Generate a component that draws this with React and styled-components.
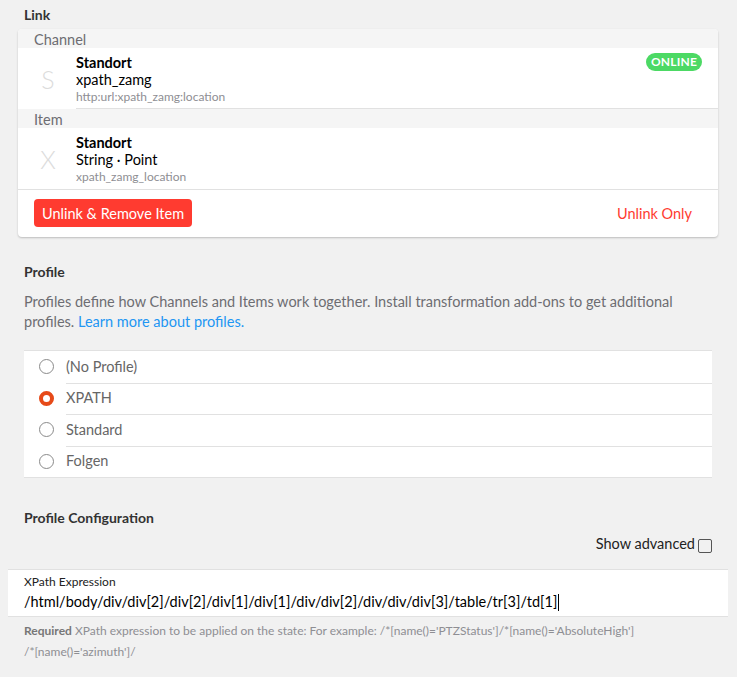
import React, { useState } from "react";
import styled, { createGlobalStyle } from "styled-components";

const GlobalStyle = createGlobalStyle`
  html, body {
    margin: 0;
    padding: 0;
    background: #f1f1f1;
    font-family: Lato, "Noto Sans", sans-serif;
    font-size: 14.5px;
    color: #000;
  }
`;

const Page = styled.div`
  display: flex;
  flex-direction: column;
  padding-bottom: 20px;
`;

const BlockTitle = styled.div`
  padding: 0 24px;
  margin: ${(p) => p.$top || 0}px 0 0;
  font-weight: 700;
  font-size: 14px;
  line-height: 16px;
  color: #333;
`;

const Card = styled.div`
  margin: 6px 19px 0 18px;
  background: #fff;
  border-radius: 4px;
  box-shadow: 0 1px 2px rgba(0, 0, 0, 0.22);
  overflow: hidden;
`;

const GroupTitle = styled.div`
  background: #f5f5f5;
  padding: 2px 16px 0;
  height: 17px;
  line-height: 17px;
  color: #6d6d72;
`;

const LinkItem = styled.div`
  display: flex;
  align-items: stretch;
`;

const Media = styled.div`
  width: 56px;
  display: flex;
  justify-content: center;
  align-items: center;
  color: #dcdcdc;
  font-size: 25px;
  font-weight: 300;
  padding-left: 2px;
`;

const Inner = styled.div`
  flex: 1;
  display: flex;
  justify-content: space-between;
  padding: 6px 16px 4px 0;
  border-bottom: 1px solid ${(p) => (p.$last ? "transparent" : "#e1e1e1")};
`;

const ItemText = styled.div`
  display: flex;
  flex-direction: column;
`;

const ItemTitle = styled.div`
  font-weight: 700;
  line-height: 17px;
`;

const ItemSubtitle = styled.div`
  line-height: 18px;
`;

const ItemFooter = styled.div`
  font-size: 12px;
  line-height: 15px;
  color: #8e8e93;
`;

const Badge = styled.span`
  align-self: flex-start;
  margin-top: -1px;
  background: #4cd964;
  color: #fff;
  font-size: 12px;
  font-weight: 700;
  line-height: 18px;
  height: 18px;
  padding: 0 5px;
  border-radius: 9px;
  letter-spacing: 0.2px;
`;

const Actions = styled.div`
  display: flex;
  justify-content: space-between;
  align-items: center;
  border-top: 1px solid #e1e1e1;
  padding: 9px 26px 10px 16px;
`;

const Button = styled.button`
  font-family: inherit;
  font-size: 14.5px;
  height: 28px;
  border: none;
  border-radius: 4px;
  padding: 0 ${(p) => (p.$fill ? 8 : 0)}px;
  background: ${(p) => (p.$fill ? "#ff3b30" : "transparent")};
  color: ${(p) => (p.$fill ? "#fff" : "#ff3b30")};
  cursor: pointer;
`;

const Description = styled.p`
  margin: 12px 0 0;
  padding: 0 24px;
  color: #6d6d72;
  line-height: 20px;

  a {
    color: #2196f3;
    text-decoration: none;
  }
`;

const RadioList = styled.div`
  margin: 18px 25px 0 24px;
  background: #fff;
  border-top: 1px solid #e1e1e1;
  border-bottom: 1px solid #e1e1e1;
`;

const RadioRow = styled.label`
  display: flex;
  align-items: center;
  height: 31.5px;
  cursor: pointer;
`;

const RadioIcon = styled.span`
  box-sizing: border-box;
  width: 15px;
  height: 15px;
  margin: 0 12px 0 15px;
  border-radius: 50%;
  border: ${(p) => (p.$checked ? "4.5px solid #e64a19" : "1.3px solid #8a8a8a")};
  background: #fff;
`;

const RadioLabel = styled.span`
  flex: 1;
  align-self: stretch;
  display: flex;
  align-items: center;
  padding-bottom: 2px;
  color: #666;
  border-top: 1px solid ${(p) => (p.$first ? "transparent" : "#e1e1e1")};
`;

const AdvancedRow = styled.label`
  display: flex;
  justify-content: flex-end;
  align-items: center;
  gap: 3px;
  padding: 0 25px;
  margin-top: 9px;
  line-height: 18px;
  color: #222;
`;

const Check = styled.span`
  box-sizing: border-box;
  width: 14px;
  height: 14px;
  border: 1px solid #555;
  border-radius: 2px;
  margin-top: 3px;
`;

const InputBlock = styled.div`
  margin: 16px 9px 0 8px;
  background: #fff;
  border-top: 1px solid #e1e1e1;
  border-bottom: 1px solid #e1e1e1;
  padding: 5px 16px 3px;
`;

const InputLabel = styled.div`
  font-size: 12px;
  line-height: 14px;
  color: #222;
`;

const InputValue = styled.div`
  margin-top: 2px;
  line-height: 22px;
  color: #000;
  display: flex;
  align-items: center;
`;

const Caret = styled.span`
  display: inline-block;
  width: 1px;
  height: 17px;
  background: #000;
  margin-left: 1px;
`;

const Helper = styled.div`
  padding: 3px 24px 0;
  font-size: 12px;
  line-height: 21px;
  color: #8e8e93;

  b {
    color: #777;
    font-weight: 700;
  }
`;

const Path = styled.span`
  white-space: nowrap;
`;

const profiles = ["(No Profile)", "XPATH", "Standard", "Folgen"];

export default function App() {
  const [profile, setProfile] = useState("XPATH");

  return (
    <Page>
      <GlobalStyle />
      <BlockTitle $top={7}>Link</BlockTitle>
      <Card>
        <GroupTitle>Channel</GroupTitle>
        <LinkItem>
          <Media>S</Media>
          <Inner>
            <ItemText>
              <ItemTitle>Standort</ItemTitle>
              <ItemSubtitle>xpath_zamg</ItemSubtitle>
              <ItemFooter>http:url:xpath_zamg:location</ItemFooter>
            </ItemText>
            <Badge>ONLINE</Badge>
          </Inner>
        </LinkItem>
        <GroupTitle>Item</GroupTitle>
        <LinkItem>
          <Media>X</Media>
          <Inner $last>
            <ItemText>
              <ItemTitle>Standort</ItemTitle>
              <ItemSubtitle>String · Point</ItemSubtitle>
              <ItemFooter>xpath_zamg_location</ItemFooter>
            </ItemText>
          </Inner>
        </LinkItem>
        <Actions>
          <Button $fill>Unlink &amp; Remove Item</Button>
          <Button>Unlink Only</Button>
        </Actions>
      </Card>

      <BlockTitle $top={27}>Profile</BlockTitle>
      <Description>
        Profiles define how Channels and Items work together. Install
        transformation add-ons to get additional profiles.{" "}
        <a href="#profiles">Learn more about profiles.</a>
      </Description>
      <RadioList>
        {profiles.map((name, i) => (
          <RadioRow key={name} onClick={() => setProfile(name)}>
            <RadioIcon $checked={profile === name} />
            <RadioLabel $first={i === 0}>{name}</RadioLabel>
          </RadioRow>
        ))}
      </RadioList>

      <BlockTitle $top={32}>Profile Configuration</BlockTitle>
      <AdvancedRow>
        Show advanced <Check />
      </AdvancedRow>
      <InputBlock>
        <InputLabel>XPath Expression</InputLabel>
        <InputValue>
          /html/body/div/div[2]/div[2]/div[1]/div[1]/div/div[2]/div/div/div[3]/table/tr[3]/td[1]
          <Caret />
        </InputValue>
      </InputBlock>
      <Helper>
        <b>Required</b> XPath expression to be applied on the state: For
        example: <Path>/*[name()='PTZStatus']/*[name()='AbsoluteHigh']</Path>
        <wbr />
        <Path>/*[name()='azimuth']/</Path>
      </Helper>
    </Page>
  );
}
